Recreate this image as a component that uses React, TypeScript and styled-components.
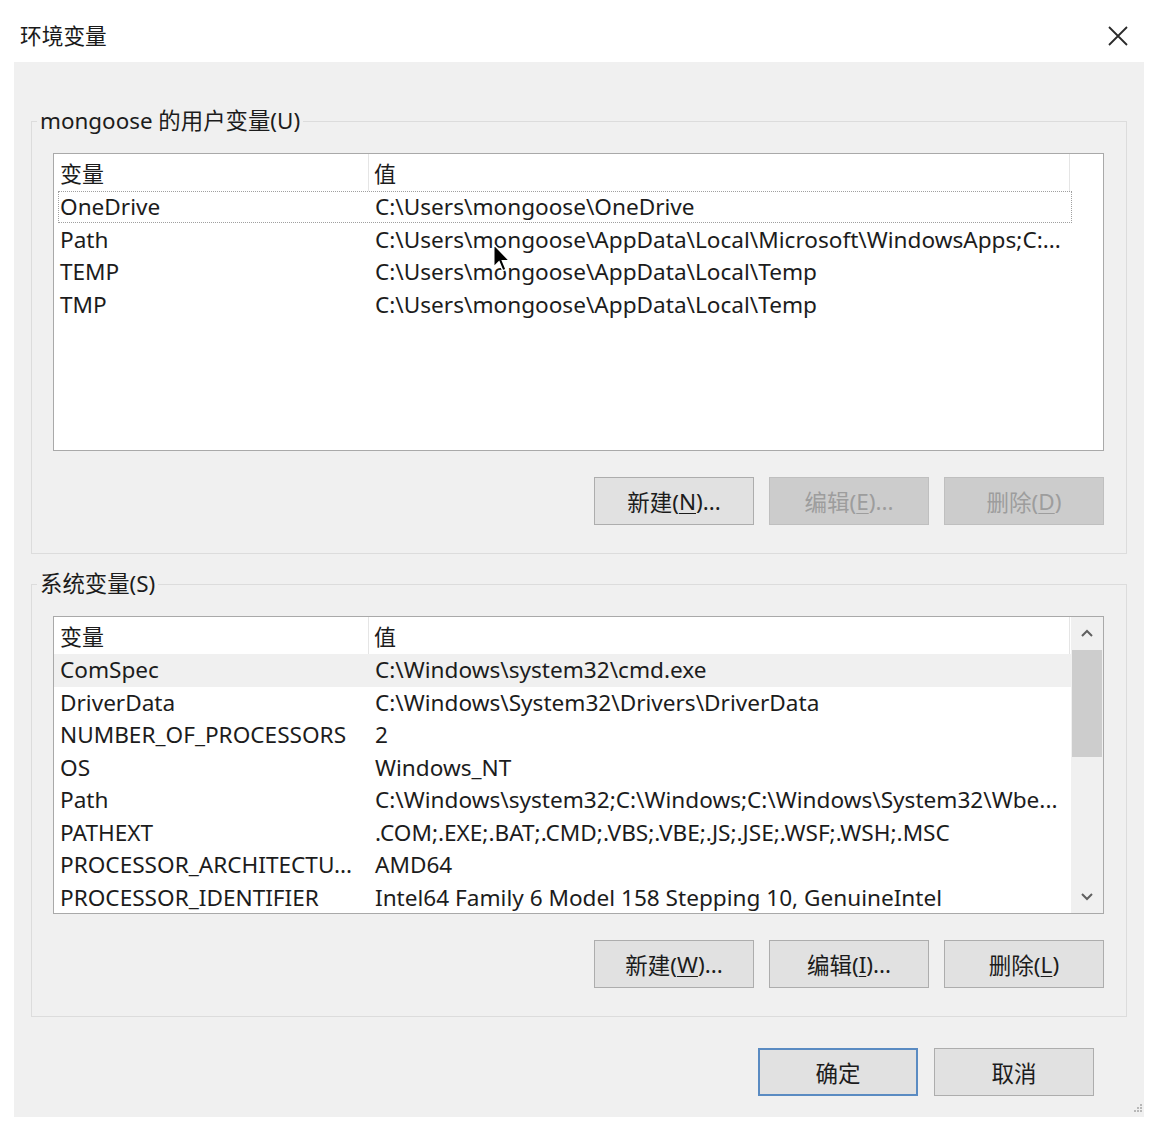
import React from 'react';
import styled, { createGlobalStyle, css } from 'styled-components';

const GlobalStyle = createGlobalStyle`
  html, body { margin: 0; padding: 0; background: #ffffff; }
  body {
    font-family: "Noto Sans", "Noto Sans CJK SC", sans-serif;
    color: #1c1c1c;
    -webkit-font-smoothing: antialiased;
  }
  * { box-sizing: border-box; }
`;

const Window = styled.div`
  position: relative;
  width: 1152px;
  height: 1130px;
  background: #ffffff;
  overflow: hidden;
`;

const TitleBar = styled.div`
  height: 62px;
  display: flex;
  align-items: flex-start;
  justify-content: space-between;
  padding: 21px 24px 0 20px;
`;

const Title = styled.div`
  font-size: 21.7px;
  line-height: 30px;
  color: #1a1a1a;
`;

const CloseButton = styled.div`
  width: 20px;
  height: 20px;
  margin-top: 5px;
  display: flex;
`;

const Body = styled.div`
  width: 1130px;
  height: 1055px;
  margin-left: 14px;
  background: #f0f0f0;
  padding: 0 17px;
  display: flex;
  flex-direction: column;
`;

const GroupBox = styled.div<{ $top: number }>`
  margin-top: ${(p) => p.$top}px;
  border: 1px solid #dcdcdc;
  padding: 0 22px 28px 21px;
  display: flex;
  flex-direction: column;
`;

const GroupLabel = styled.div`
  align-self: flex-start;
  margin: -15px 0 0 -16px;
  padding: 0 3px;
  background: #f0f0f0;
  font-size: 22.4px;
  line-height: 28px;
  color: #1c1c1c;
`;

const ListBox = styled.div`
  margin-top: 18px;
  height: 298px;
  border: 1px solid #a9a9a9;
  background: #ffffff;
  display: flex;
  overflow: hidden;
`;

const ListTable = styled.div`
  flex: 1;
  display: flex;
  flex-direction: column;
  min-width: 0;
`;

const HeaderRow = styled.div`
  height: 37px;
  display: flex;
  flex-shrink: 0;
`;

const HeaderCell = styled.div<{ $w: number; $pad: number }>`
  width: ${(p) => p.$w}px;
  padding-left: ${(p) => p.$pad}px;
  border-right: 1px solid #e5e5e5;
  font-size: 22px;
  line-height: 38px;
  white-space: nowrap;
  color: #1c1c1c;
`;

const Row = styled.div<{ $hover?: boolean; $focus?: boolean }>`
  position: relative;
  height: 32.5px;
  display: flex;
  flex-shrink: 0;
  ${(p) =>
    p.$hover &&
    css`
      background: #f0f0f0;
    `}
  ${(p) =>
    p.$focus &&
    css`
      &::after {
        content: '';
        position: absolute;
        top: 0;
        bottom: 1px;
        left: 4px;
        width: 1012px;
        border: 1px dotted #a0a0a0;
      }
    `}
`;

const Cell = styled.div<{ $w: number; $pad: number }>`
  width: ${(p) => p.$w}px;
  flex-shrink: 0;
  padding-left: ${(p) => p.$pad}px;
  font-size: 22.6px;
  line-height: 32px;
  white-space: nowrap;
  overflow: hidden;
  color: #1c1c1c;
`;

const ScrollBar = styled.div`
  width: 32px;
  flex-shrink: 0;
  background: #f0f0f0;
  display: flex;
  flex-direction: column;
`;

const ScrollArrow = styled.div`
  height: 33px;
  display: flex;
  align-items: center;
  justify-content: center;
  flex-shrink: 0;
`;

const ScrollThumb = styled.div`
  height: 107px;
  margin: 0 1px;
  background: #cdcdcd;
  flex-shrink: 0;
`;

const ScrollTrack = styled.div`
  flex: 1;
`;

const ButtonRow = styled.div<{ $top: number; $right: number; $gap: number }>`
  margin-top: ${(p) => p.$top}px;
  margin-right: ${(p) => p.$right}px;
  display: flex;
  justify-content: flex-end;
  gap: ${(p) => p.$gap}px;
`;

const Button = styled.div<{ $disabled?: boolean; $default?: boolean }>`
  width: 160px;
  height: 48px;
  display: flex;
  align-items: center;
  justify-content: center;
  font-size: 22.5px;
  background: #e1e1e1;
  border: 1px solid #adadad;
  color: #1c1c1c;
  ${(p) =>
    p.$disabled &&
    css`
      background: #cccccc;
      border-color: #bfbfbf;
      color: #9d9d9d;
    `}
  ${(p) =>
    p.$default &&
    css`
      border: 2px solid #5a8bc2;
    `}
  u {
    text-decoration-thickness: 1px;
    text-underline-offset: 3px;
  }
`;

const Cursor = styled.svg`
  position: absolute;
  left: 492px;
  top: 243px;
`;

const Grip = styled.svg`
  position: absolute;
  left: 1128px;
  top: 1101px;
`;

type Var = [string, string];

const userVars: Var[] = [
  ['OneDrive', 'C:\\Users\\mongoose\\OneDrive'],
  ['Path', 'C:\\Users\\mongoose\\AppData\\Local\\Microsoft\\WindowsApps;C:...'],
  ['TEMP', 'C:\\Users\\mongoose\\AppData\\Local\\Temp'],
  ['TMP', 'C:\\Users\\mongoose\\AppData\\Local\\Temp'],
];

const sysVars: Var[] = [
  ['ComSpec', 'C:\\Windows\\system32\\cmd.exe'],
  ['DriverData', 'C:\\Windows\\System32\\Drivers\\DriverData'],
  ['NUMBER_OF_PROCESSORS', '2'],
  ['OS', 'Windows_NT'],
  ['Path', 'C:\\Windows\\system32;C:\\Windows;C:\\Windows\\System32\\Wbe...'],
  ['PATHEXT', '.COM;.EXE;.BAT;.CMD;.VBS;.VBE;.JS;.JSE;.WSF;.WSH;.MSC'],
  ['PROCESSOR_ARCHITECTU...', 'AMD64'],
  ['PROCESSOR_IDENTIFIER', 'Intel64 Family 6 Model 158 Stepping 10, GenuineIntel'],
];

const Header = () => (
  <HeaderRow>
    <HeaderCell $w={315} $pad={6}>变量</HeaderCell>
    <HeaderCell $w={701} $pad={5}>值</HeaderCell>
  </HeaderRow>
);

const Chevron = ({ up }: { up?: boolean }) => (
  <svg width="14" height="9" viewBox="0 0 14 9">
    <path
      d={up ? 'M2 7 L7 2 L12 7' : 'M2 2 L7 7 L12 2'}
      fill="none"
      stroke="#606060"
      strokeWidth="2"
    />
  </svg>
);

export default function App() {
  return (
    <Window>
      <GlobalStyle />
      <TitleBar>
        <Title>环境变量</Title>
        <CloseButton>
          <svg width="20" height="20" viewBox="0 0 20 20">
            <path d="M1 1 L19 19 M19 1 L1 19" stroke="#2a2a2a" strokeWidth="1.8" />
          </svg>
        </CloseButton>
      </TitleBar>
      <Body>
        <GroupBox $top={59}>
          <GroupLabel>mongoose 的用户变量(U)</GroupLabel>
          <ListBox>
            <ListTable>
              <Header />
              {userVars.map(([n, v], i) => (
                <Row key={n} $focus={i === 0}>
                  <Cell $w={315} $pad={6}>{n}</Cell>
                  <Cell $w={701} $pad={6}>{v}</Cell>
                </Row>
              ))}
            </ListTable>
          </ListBox>
          <ButtonRow $top={26} $right={0} $gap={15}>
            <Button>新建(<u>N</u>)...</Button>
            <Button $disabled>编辑(<u>E</u>)...</Button>
            <Button $disabled>删除(<u>D</u>)</Button>
          </ButtonRow>
        </GroupBox>
        <GroupBox $top={30}>
          <GroupLabel>系统变量(S)</GroupLabel>
          <ListBox>
            <ListTable>
              <Header />
              {sysVars.map(([n, v], i) => (
                <Row key={n} $hover={i === 0}>
                  <Cell $w={315} $pad={6}>{n}</Cell>
                  <Cell $w={701} $pad={6}>{v}</Cell>
                </Row>
              ))}
            </ListTable>
            <ScrollBar>
              <ScrollArrow>
                <Chevron up />
              </ScrollArrow>
              <ScrollThumb />
              <ScrollTrack />
              <ScrollArrow>
                <Chevron />
              </ScrollArrow>
            </ScrollBar>
          </ListBox>
          <ButtonRow $top={26} $right={0} $gap={15}>
            <Button>新建(<u>W</u>)...</Button>
            <Button>编辑(<u>I</u>)...</Button>
            <Button>删除(<u>L</u>)</Button>
          </ButtonRow>
        </GroupBox>
        <ButtonRow $top={31} $right={33} $gap={16}>
          <Button $default>确定</Button>
          <Button>取消</Button>
        </ButtonRow>
      </Body>
      <Cursor width="20" height="30" viewBox="0 0 13 20">
        <path
          d="M1 1 L1 16 L4.5 12.5 L7 18.5 L9.2 17.6 L6.8 11.8 L11.5 11.8 Z"
          fill="#000"
          stroke="#fff"
          strokeWidth="1"
        />
      </Cursor>
      <Grip width="16" height="16" viewBox="0 0 16 16">
        <g fill="#b8b8b8">
          <rect x="12" y="3" width="2" height="2" />
          <rect x="9" y="6" width="2" height="2" />
          <rect x="12" y="6" width="2" height="2" />
          <rect x="6" y="9" width="2" height="2" />
          <rect x="9" y="9" width="2" height="2" />
          <rect x="12" y="9" width="2" height="2" />
        </g>
      </Grip>
    </Window>
  );
}
